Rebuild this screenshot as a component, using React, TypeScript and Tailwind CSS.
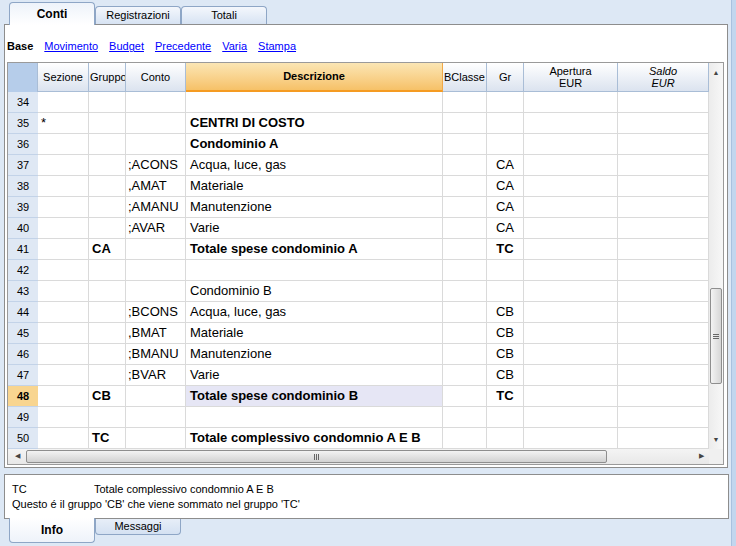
import React from 'react';

type Row = {
  n: number;
  sez?: string;
  grp?: string;
  conto?: string;
  desc?: string;
  gr?: string;
  bold?: boolean;
  sel?: boolean;
};

const rows: Row[] = [
  { n: 34 },
  { n: 35, sez: '*', desc: 'CENTRI DI COSTO', bold: true },
  { n: 36, desc: 'Condominio A', bold: true },
  { n: 37, conto: ';ACONS', desc: 'Acqua, luce, gas', gr: 'CA' },
  { n: 38, conto: ',AMAT', desc: 'Materiale', gr: 'CA' },
  { n: 39, conto: ';AMANU', desc: 'Manutenzione', gr: 'CA' },
  { n: 40, conto: ';AVAR', desc: 'Varie', gr: 'CA' },
  { n: 41, grp: 'CA', desc: 'Totale spese condominio A', gr: 'TC', bold: true },
  { n: 42 },
  { n: 43, desc: 'Condominio B' },
  { n: 44, conto: ';BCONS', desc: 'Acqua, luce, gas', gr: 'CB' },
  { n: 45, conto: ',BMAT', desc: 'Materiale', gr: 'CB' },
  { n: 46, conto: ';BMANU', desc: 'Manutenzione', gr: 'CB' },
  { n: 47, conto: ';BVAR', desc: 'Varie', gr: 'CB' },
  { n: 48, grp: 'CB', desc: 'Totale spese condominio B', gr: 'TC', bold: true, sel: true },
  { n: 49 },
  { n: 50, grp: 'TC', desc: 'Totale complessivo condomnio A E B', bold: true },
];

const cols = 'grid grid-cols-[30px_51px_37px_60px_257px_44px_37px_94px_91px]';
const ui = { fontFamily: '"Liberation Sans", Arial, sans-serif' };

function Header() {
  const cell =
    'flex items-center justify-center border-r border-[#a9bdd6] bg-gradient-to-b from-white to-[#dbe3ef] border-b border-b-[#a9bdd6] text-[11px] text-black overflow-hidden whitespace-nowrap';
  return (
    <div className={`${cols} h-[29px]`}>
      <div className="bg-[#b6cdea] border-r border-[#a9bdd6]" />
      <div className={cell}>Sezione</div>
      <div className={`${cell} justify-start pl-[1px]`}>Gruppo</div>
      <div className={cell}>Conto</div>
      <div className="flex items-center justify-center bg-gradient-to-b from-[#fbe6b4] to-[#f6c167] border-b-2 border-[#f59b22] text-[11px] font-bold border-r border-r-[#f0a848]">
        Descrizione
      </div>
      <div className={cell}>BClasse</div>
      <div className={cell}>Gr</div>
      <div className={`${cell} flex-col leading-[12px]`}>
        <span>Apertura</span>
        <span>EUR</span>
      </div>
      <div className={`${cell} flex-col leading-[12px] italic text-[#555]`}>
        <span>Saldo</span>
        <span>EUR</span>
      </div>
    </div>
  );
}

function DataRow({ r }: { r: Row }) {
  const c = 'border-r border-b border-[#dadada] flex items-center overflow-hidden whitespace-nowrap';
  const w = r.bold ? 'font-bold' : '';
  return (
    <div className={`${cols} h-[21px] text-[13px] text-black`} style={{ fontFamily: '"Liberation Sans", Arial, sans-serif' }}>
      <div
        className={`flex items-center justify-center border-b border-[#c3d3e8] text-[11px] ${
          r.sel ? 'bg-[#f8d590] font-bold' : 'bg-[#dfe8f4]'
        }`}
      >
        {r.n}
      </div>
      <div className={`${c} pl-[3px]`}>{r.sez}</div>
      <div className={`${c} pl-[3px] font-bold`}>{r.grp}</div>
      <div className={`${c} pl-[2px]`}>{r.conto}</div>
      <div className={`${c} pl-[4px] ${w} ${r.sel ? 'bg-[#e6e6f5]' : ''}`}>{r.desc}</div>
      <div className={c} />
      <div className={`${c} justify-center ${w}`}>{r.gr}</div>
      <div className={c} />
      <div className={c} />
    </div>
  );
}

function VScroll() {
  return (
    <div className="w-[14px] flex flex-col bg-gradient-to-r from-[#ececec] to-[#f7f7f7]">
      <div className="h-[20px] flex items-center justify-center text-[7px] text-[#444]">▲</div>
      <div className="flex-1 flex flex-col">
        <div className="h-[205px]" />
        <div className="h-[96px] mx-[1px] rounded-[2px] border border-[#8e8e8e] bg-gradient-to-r from-[#f3f3f3] to-[#d6d6d6] flex items-center justify-center">
          <div className="flex flex-col gap-[1px]">
            <div className="w-[6px] h-[1px] bg-[#666]" />
            <div className="w-[6px] h-[1px] bg-[#666]" />
            <div className="w-[6px] h-[1px] bg-[#666]" />
          </div>
        </div>
        <div className="flex-1" />
      </div>
      <div className="h-[18px] flex items-center justify-center text-[7px] text-[#444]">▼</div>
    </div>
  );
}

function HScroll() {
  return (
    <div className="flex h-[15px]">
      <div className="w-[701px] flex items-center bg-gradient-to-b from-[#f4f4f4] to-[#e8e8e8]">
        <div className="w-[18px] flex items-center justify-center text-[7px] text-[#444]">◀</div>
        <div className="w-[581px] h-[13px] rounded-[2px] border border-[#8e8e8e] bg-gradient-to-b from-[#f3f3f3] to-[#d2d2d2] flex items-center justify-center">
          <div className="flex gap-[1px]">
            <div className="w-[1px] h-[6px] bg-[#666]" />
            <div className="w-[1px] h-[6px] bg-[#666]" />
            <div className="w-[1px] h-[6px] bg-[#666]" />
          </div>
        </div>
        <div className="flex-1 flex items-center justify-end pr-[5px] text-[7px] text-[#444]">▶</div>
      </div>
      <div className="w-[14px] bg-[#f0f0f0]" />
    </div>
  );
}

export default function App() {
  return (
    <div className="w-[736px] h-[546px] bg-[#dde8f5] flex overflow-hidden" style={ui}>
      <div className="w-[731px] flex flex-col">
        {/* Top tabs */}
        <div className="h-[24px] flex items-end pl-[9px]">
          <div className="w-[86px] h-[23px] rounded-t-[4px] border border-b-0 border-[#8ea6c6] bg-gradient-to-b from-[#eef3fa] to-white flex items-center justify-center text-[12px] font-bold relative top-[1px]">
            Conti
          </div>
          <div className="w-[86px] h-[18px] rounded-t-[4px] border border-b-0 border-[#8ea6c6] bg-gradient-to-b from-[#f4f7fc] to-[#d7e3f3] flex items-center justify-center text-[11px]">
            Registrazioni
          </div>
          <div className="w-[86px] h-[18px] rounded-t-[4px] border border-b-0 border-[#8ea6c6] bg-gradient-to-b from-[#f4f7fc] to-[#d7e3f3] flex items-center justify-center text-[11px]">
            Totali
          </div>
        </div>

        {/* Main panel */}
        <div className="ml-[4px] w-[724px] h-[444px] border border-[#8d8d8d] bg-white flex flex-col">
          <div className="h-[37px] flex items-center gap-[11px] pl-[2px] pt-[6px] text-[11px]">
            <span className="font-bold">Base</span>
            <span className="text-[#0000ff] underline">Movimento</span>
            <span className="text-[#0000ff] underline">Budget</span>
            <span className="text-[#0000ff] underline">Precedente</span>
            <span className="text-[#0000ff] underline">Varia</span>
            <span className="text-[#0000ff] underline">Stampa</span>
          </div>
          <div className="ml-[2px] w-[717px] border border-[#9a9a9a] flex flex-col">
            <div className="flex">
              <div className="flex flex-col">
                <Header />
                {rows.map((r) => (
                  <DataRow key={r.n} r={r} />
                ))}
              </div>
              <VScroll />
            </div>
            <HScroll />
          </div>
        </div>

        {/* Info panel */}
        <div className="ml-[4px] mt-[6px] w-[725px] h-[45px] border border-[#8d8d8d] bg-white text-[11px] pl-[7px] pt-[7px] leading-[15px]">
          <div className="flex">
            <span className="w-[82px]">TC</span>
            <span>Totale complessivo condomnio A E B</span>
          </div>
          <div>Questo é il gruppo 'CB' che viene sommato nel gruppo 'TC'</div>
        </div>

        {/* Bottom tabs */}
        <div className="flex items-start pl-[9px]">
          <div className="w-[86px] h-[25px] -mt-[1px] rounded-b-[4px] border border-t-0 border-[#8ea6c6] bg-gradient-to-b from-white to-[#eef3fa] flex items-center justify-center text-[12px] font-bold">
            Info
          </div>
          <div className="w-[86px] h-[16px] rounded-b-[4px] border border-t-0 border-[#8ea6c6] bg-gradient-to-b from-[#e7eef8] to-[#d4e1f2] flex items-center justify-center text-[11px]">
            Messaggi
          </div>
        </div>
      </div>
      <div className="w-[5px] bg-[#c2d6ee] border-l border-[#a9c1df]" />
    </div>
  );
}
